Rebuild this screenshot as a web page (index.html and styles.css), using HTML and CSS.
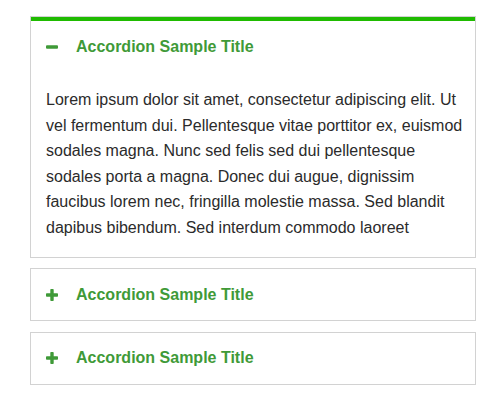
FILE: index.html
```html
<!DOCTYPE html>
<html>
<head>
<meta charset="utf-8">
<link rel="stylesheet" href="styles.css">
</head>
<body>
<div class="accordion">
  <div class="panel open">
    <div class="head">
      <svg class="icon" width="12" height="12" viewBox="0 0 12 12"><rect x="0" y="4.3" width="12" height="3.4" rx="1" fill="#3f9a38"/></svg>
      <span class="title">Accordion Sample Title</span>
    </div>
    <div class="body">Lorem ipsum dolor sit amet, consectetur adipiscing elit. Ut<br>vel fermentum dui. Pellentesque vitae porttitor ex, euismod<br>sodales magna. Nunc sed felis sed dui pellentesque<br>sodales porta a magna. Donec dui augue, dignissim<br>faucibus lorem nec, fringilla molestie massa. Sed blandit<br>dapibus bibendum. Sed interdum commodo laoreet</div>
  </div>
  <div class="panel">
    <div class="head">
      <svg class="icon" width="12" height="12" viewBox="0 0 12 12"><rect x="0" y="4.3" width="12" height="3.4" rx="0.8" fill="#3f9a38"/><rect x="4.3" y="0" width="3.4" height="12" rx="0.8" fill="#3f9a38"/></svg>
      <span class="title">Accordion Sample Title</span>
    </div>
  </div>
  <div class="panel">
    <div class="head">
      <svg class="icon" width="12" height="12" viewBox="0 0 12 12"><rect x="0" y="4.3" width="12" height="3.4" rx="0.8" fill="#3f9a38"/><rect x="4.3" y="0" width="3.4" height="12" rx="0.8" fill="#3f9a38"/></svg>
      <span class="title">Accordion Sample Title</span>
    </div>
  </div>
</div>
</body>
</html>
```
FILE: styles.css
```css
html, body {
  margin: 0;
  padding: 0;
  background: #fff;
}
.accordion {
  padding: 16px 0 0 30px;
  width: 446px;
  display: flex;
  flex-direction: column;
  gap: 10.5px;
}
.panel {
  border: 1px solid #d2d2d2;
}
.panel.open .head {
  border-top: 4px solid #1fbb00;
}
.head {
  height: 51px;
  display: flex;
  align-items: center;
  padding: 0 15px;
  gap: 18px;
}
.icon {
  display: block;
  flex: none;
}
.title {
  font-family: "Liberation Sans", Arial, sans-serif;
  font-weight: 700;
  font-size: 16px;
  color: #3f9a38;
}
.body {
  font-family: "Liberation Sans", Arial, sans-serif;
  font-size: 16px;
  line-height: 1.6;
  color: #2b2b2b;
  padding: 15px 12px 16px 15px;
  white-space: nowrap;
}
```
